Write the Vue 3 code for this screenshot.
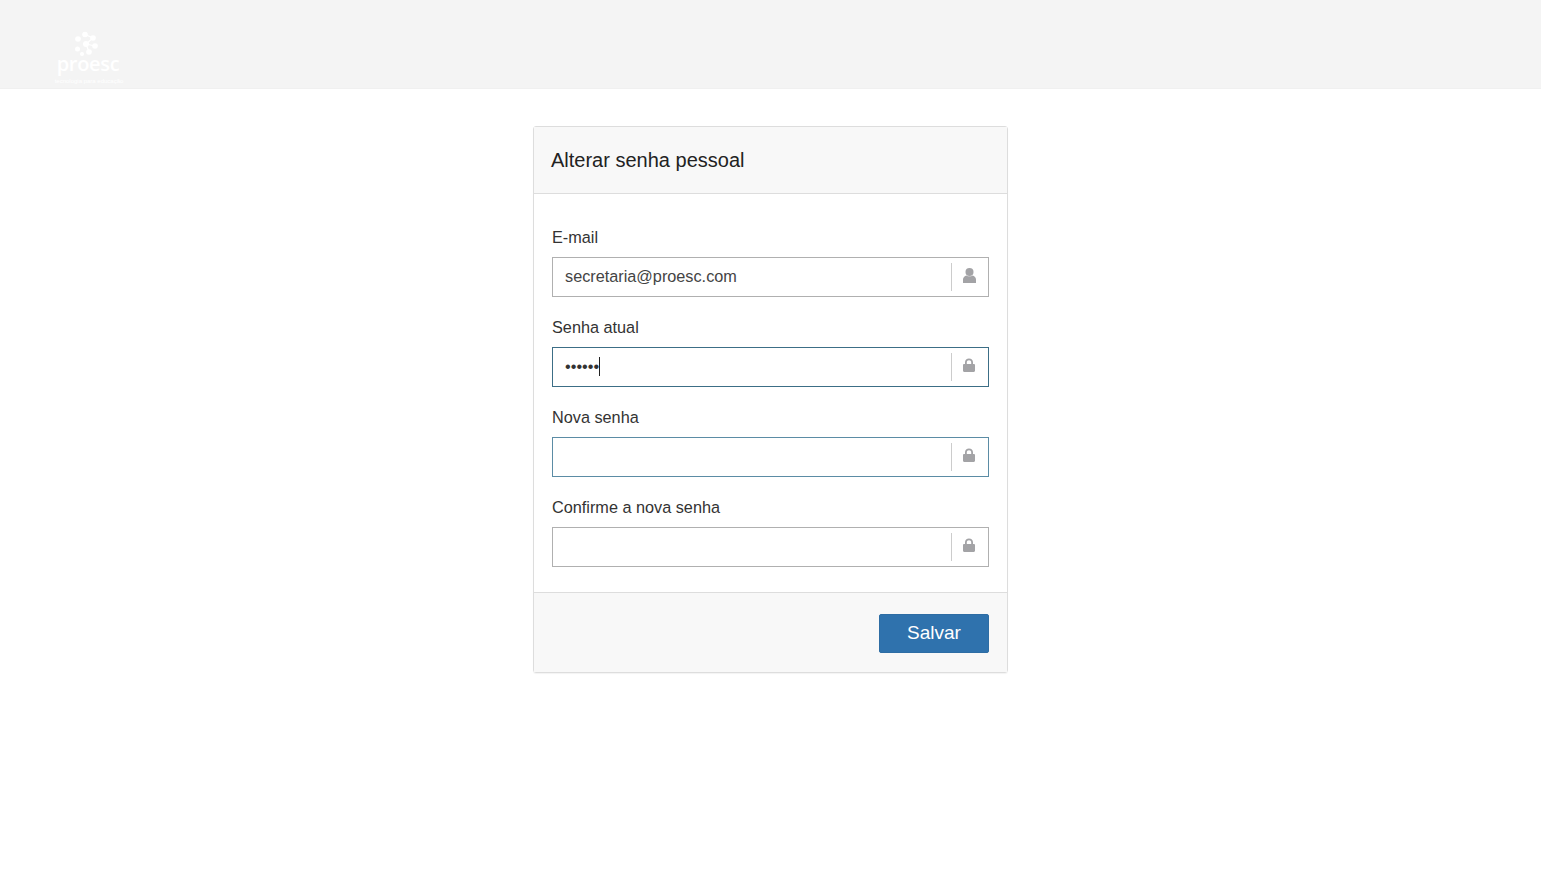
<script setup>
const fields = [
  { label: 'E-mail', value: 'secretaria@proesc.com', icon: 'user', state: '' },
  { label: 'Senha atual', value: '••••••', icon: 'lock', state: 'focused', caret: true, secret: true },
  { label: 'Nova senha', value: '', icon: 'lock', state: 'hover' },
  { label: 'Confirme a nova senha', value: '', icon: 'lock', state: '' },
]
</script>

<template>
  <div class="page">
    <header class="top">
      <div class="logo">
        <svg class="mark" width="26" height="26" viewBox="0 0 26 26" fill="#fff">
          <circle cx="11" cy="3.500" r="2.800" /><circle cx="4" cy="8" r="2.800" />
          <circle cx="19" cy="7" r="2.800" /><circle cx="12" cy="13" r="3" />
          <circle cx="3.500" cy="18" r="2.500" /><circle cx="21" cy="15" r="2.800" />
          <circle cx="15" cy="21" r="2.800" /><circle cx="8" cy="23" r="2" />
          <path d="M11 3.500l8 3.500-7 6 3 8M12 13l9 2" stroke="#fff" stroke-width="1.200" fill="none" />
        </svg>
        <div class="brand">proesc</div>
        <div class="tag">tecnologia para educação</div>
      </div>
    </header>

    <main class="main">
      <section class="panel">
        <div class="head">Alterar senha pessoal</div>
        <div class="body">
          <div v-for="f in fields" :key="f.label" class="group">
            <div class="label">{{ f.label }}</div>
            <div class="field" :class="f.state">
              <span class="value" :class="{ secret: f.secret }">{{ f.value }}<i v-if="f.caret" class="caret"></i></span>
              <span class="addon">
                <svg v-if="f.icon === 'user'" width="13" height="16" viewBox="0 0 13 16" fill="#a3a3a6">
                  <ellipse cx="6.500" cy="4" rx="4" ry="4" />
                  <path d="M0 15v-3.600C0 9.400 1.600 8 3.400 7.400c1.800 1.200 4.400 1.200 6.200 0C11.400 8 13 9.400 13 11.400V15z" />
                </svg>
                <svg v-else class="lock" width="12" height="14" viewBox="0 0 12 14" fill="#a3a3a6">
                  <path fill-rule="evenodd" d="M2 6V4.200C2 1.900 3.700.4 6 .4s4 1.500 4 3.800V6h.8c.7 0 1.200.5 1.200 1.200v5.600c0 .7-.5 1.200-1.200 1.200H1.200C.5 14 0 13.500 0 12.800V7.200C0 6.500.5 6 1.200 6zM3.800 6h4.400V4.300C8.200 3 7.300 2.200 6 2.200S3.800 3 3.800 4.300z" />
                </svg>
              </span>
            </div>
          </div>
        </div>
        <div class="foot">
          <button class="save" type="button">Salvar</button>
        </div>
      </section>
    </main>
  </div>
</template>

<style scoped>
.page {
  min-height: 891px;
  background: #fff;
  font-family: "Liberation Sans", Arial, sans-serif;
  color: #333;
}
.top {
  height: 88px;
  background: #f4f4f4;
  border-bottom: 1px solid #f0f0f0;
  padding-left: 54px;
  overflow: hidden;
}
.logo {
  width: 70px;
  display: flex;
  flex-direction: column;
  align-items: center;
  padding-top: 31px;
}
.mark {
  display: block;
  margin-left: -4px;
}
.brand {
  color: #fff;
  font-family: "Open Sans", sans-serif;
  font-size: 20px;
  line-height: 16px;
  margin-top: -1px;
  margin-left: -2px;
  font-weight: 600;
  letter-spacing: -.3px;
}
.tag {
  color: #fff;
  font-size: 6px;
  line-height: 6px;
  margin-top: 6px;
  white-space: nowrap;
}
.main {
  display: flex;
  justify-content: center;
  padding-top: 37px;
}
.panel {
  width: 475px;
  box-sizing: border-box;
  border: 1px solid #ddd;
  border-radius: 3px;
  box-shadow: 0 1px 1px rgba(0, 0, 0, .05);
}
.head {
  height: 67px;
  box-sizing: border-box;
  background: #f8f8f8;
  border-bottom: 1px solid #ddd;
  padding: 0 17px;
  font-size: 20px;
  line-height: 66px;
  color: #222;
}
.body {
  padding: 34px 18px 25px;
  display: flex;
  flex-direction: column;
  gap: 21px;
}
.group { display: flex; flex-direction: column; }
.label {
  font-size: 16.25px;
  line-height: 18px;
  margin-bottom: 11px;
  color: #333;
}
.field {
  height: 40px;
  box-sizing: border-box;
  border: 1px solid #b0b0b0;
  display: flex;
  align-items: center;
  background: #fff;
}
.field.focused { border-color: #3c6e86; }
.field.hover { border-color: #5b8ca5; }
.value {
  flex: 1;
  padding-left: 12px;
  padding-bottom: 2px;
  font-size: 16.25px;
  line-height: 20px;
  color: #444;
  display: flex;
  align-items: center;
}
.value.secret {
  color: #333;
}
.caret {
  display: block;
  width: 1px;
  height: 19px;
  background: #222;
}
.addon {
  width: 36px;
  height: 28px;
  border-left: 1px solid #ccc;
  display: flex;
  align-items: center;
  justify-content: center;
}
.addon svg {
  position: relative;
  top: -1px;
  left: -1px;
}
.addon svg.lock {
  top: -2px;
}
.foot {
  height: 80px;
  box-sizing: border-box;
  background: #f8f8f8;
  border-top: 1px solid #ddd;
  display: flex;
  justify-content: flex-end;
  align-items: flex-start;
  padding: 21px 18px 0 0;
}
.save {
  width: 110px;
  height: 39px;
  background: #2f72ad;
  border: 1px solid #2e6da4;
  border-radius: 2px;
  color: #fff;
  font-family: "Liberation Sans", Arial, sans-serif;
  font-size: 19px;
  padding: 0 0 2px;
}
</style>
